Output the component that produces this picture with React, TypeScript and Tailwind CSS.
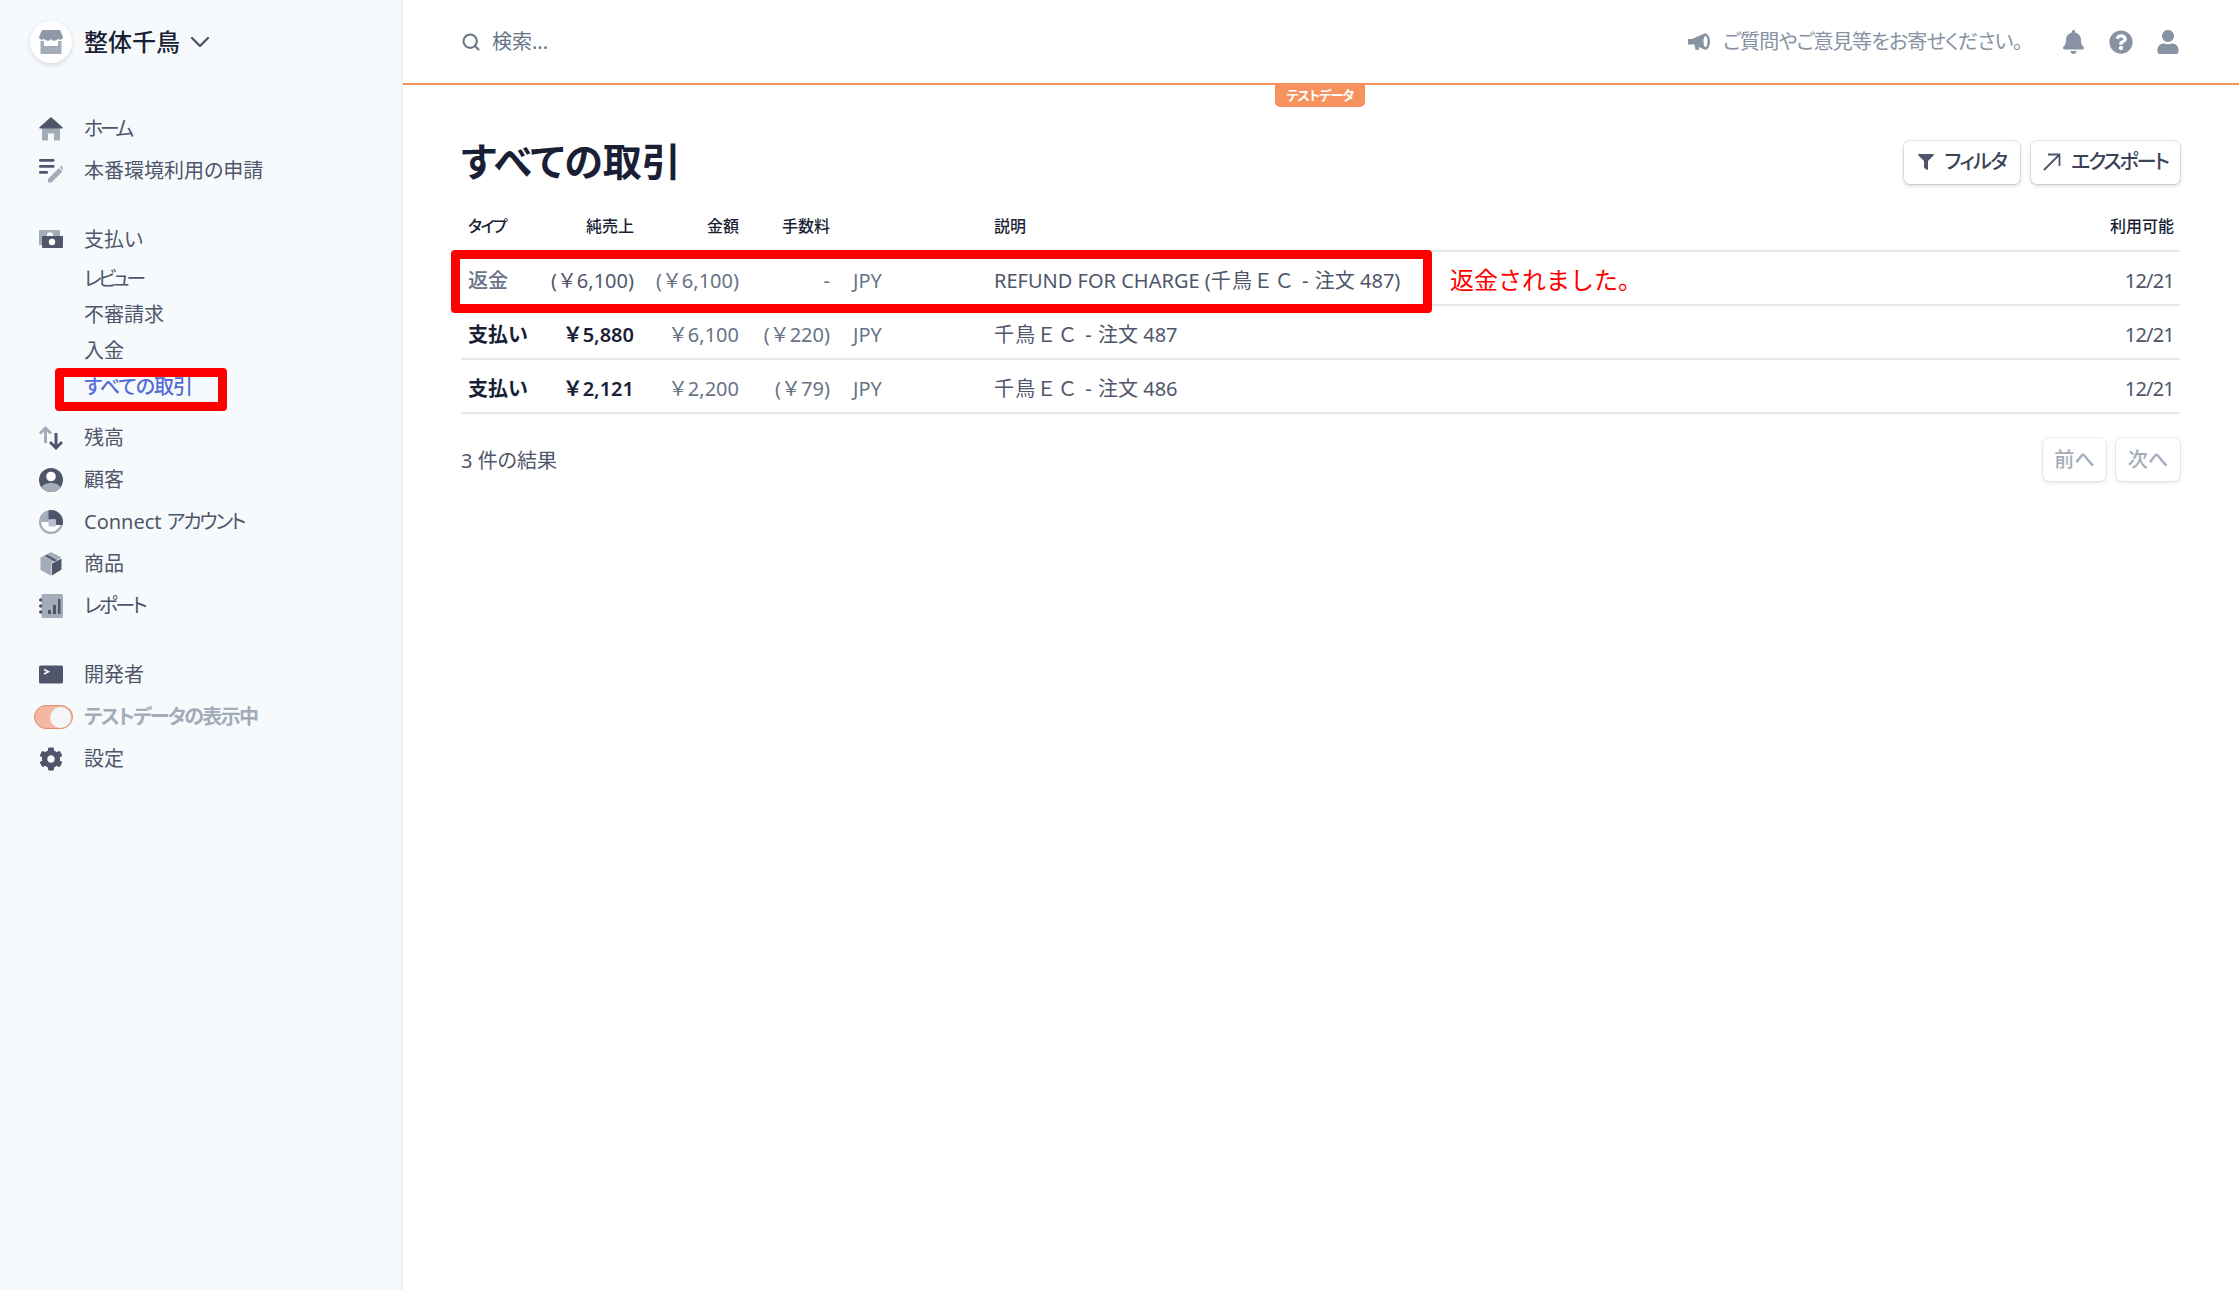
import React from 'react';
import { ChevronDown, Search } from 'lucide-react';
import { FaBell, FaCog, FaFilter, FaQuestionCircle, FaUser } from 'react-icons/fa';

const LIGHT = '#a3acb9';
const DARK = '#4f566b';

const IconBox: React.FC<{ children: React.ReactNode }> = ({ children }) => (
  <svg viewBox="0 0 24 24" className="w-6 h-6 shrink-0">{children}</svg>
);

const HomeIcon = () => (
  <IconBox>
    <path fill={LIGHT} d="M3 11h18v11.500a1 1 0 0 1-1 1h-5v-7H9v7H4a1 1 0 0 1-1-1z" />
    <path fill={DARK} d="M12 0 23.500 10.200c.5.5.2 1.300-.5 1.300H1c-.7 0-1-.8-.5-1.300z" />
  </IconBox>
);
const ApplyIcon = () => (
  <IconBox>
    <rect y="0" width="15.500" height="2.800" rx="1.200" fill={DARK} />
    <rect y="6" width="15.500" height="2.800" rx="1.200" fill={DARK} />
    <rect y="12" width="9" height="2.800" rx="1.200" fill={DARK} />
    <path fill={LIGHT} d="M9 23.500v-3.500L20 9l3.500 3.500-11 11z" />
    <path fill={LIGHT} d="M21 7.500l1-1 2 2v1.500l-1 1z" />
  </IconBox>
);
const PaymentsIcon = () => (
  <IconBox>
    <rect y="2" width="21" height="15" rx="1" fill={LIGHT} />
    <circle cx="11" cy="7.500" r="3.200" fill="#f7fafc" />
    <rect x="3" y="8" width="21" height="12" rx="1" fill={DARK} />
    <circle cx="13" cy="14" r="3.200" fill="#fff" />
  </IconBox>
);
const BalanceIcon = () => (
  <IconBox>
    <path fill={LIGHT} d="M6.500 0 13 6.500l-2 2-3-3V17H5V5.500l-3 3-2-2z" />
    <path fill={DARK} d="M17 24l-7-7 2-2 3.500 3.500V7h3v11.500L22 15l2 2z" />
  </IconBox>
);
const CustomerIcon = () => (
  <IconBox>
    <circle cx="12" cy="12" r="12" fill={DARK} />
    <path fill={LIGHT} d="M2.500 19.500C4.500 16 8 15 12 15s7.500 1 9.500 4.500A12 12 0 0 1 12 24a12 12 0 0 1-9.500-4.500z" />
    <circle cx="12" cy="8.500" r="4.800" fill="#fff" />
  </IconBox>
);
const ConnectIcon = () => (
  <IconBox>
    <circle cx="12" cy="12" r="12" fill={LIGHT} />
    <circle cx="12" cy="12" r="9.800" fill="#fff" />
    <path fill={LIGHT} d="M2.200 12A9.800 9.800 0 0 1 12 2.200V12z" />
    <path fill={DARK} d="M9.500 .3A12 12 0 0 1 24 12a12 12 0 0 1-.4 3H16.500V9.500H9.500z" />
    <rect x="9.500" y="9.500" width="7" height="7" fill="#b9c0cb" />
  </IconBox>
);
const ProductIcon = () => (
  <IconBox>
    <path fill={LIGHT} d="M12 0 22.500 5.500 12.500 11v13L1.500 18V5.500z" />
    <path fill={DARK} d="M13 11.500 22.500 6.500V17.500L13 23.500z" />
    <path fill={DARK} d="M8 2.800 18 8.300l-2 1.100L6 3.900z" />
  </IconBox>
);
const ReportIcon = () => (
  <IconBox>
    <rect x="2.500" width="21.500" height="24" rx="1.500" fill={LIGHT} />
    <circle cx="1.700" cy="6" r="1.700" fill={DARK} />
    <circle cx="1.700" cy="12" r="1.700" fill={DARK} />
    <circle cx="1.700" cy="18" r="1.700" fill={DARK} />
    <path fill={DARK} d="M9 16h3v4H9zM14 11h3v9h-3zM19 5h2.500v15H19z" />
  </IconBox>
);
const DeveloperIcon = () => (
  <IconBox>
    <rect y="2.500" width="24" height="18" rx="1.500" fill={DARK} />
    <path d="M5 6.500l4.500 2.300L5 11" fill="none" stroke="#fff" strokeWidth="1.500" />
  </IconBox>
);
const StoreIcon = () => (
  <svg viewBox="0 0 24 24" className="w-6 h-6">
    <path fill="#8f99a8" d="M3 0h18l3 7a2.700 2.700 0 0 1-4.800 1.700A3.400 3.400 0 0 1 16 10.500a3.400 3.400 0 0 1-4-1.500 3.400 3.400 0 0 1-4 1.500 3.400 3.400 0 0 1-3.200-1.800A2.700 2.700 0 0 1 0 7z" />
    <path fill={LIGHT} d="M1.500 11H5v5h14v-5h3.500v12a1 1 0 0 1-1 1h-19a1 1 0 0 1-1-1z" />
  </svg>
);
const MegaphoneIcon = () => (
  <svg viewBox="0 0 22 17" className="w-[22px] h-[17px]">
    <path fill="#8792a2" d="M0 6h4L17 .2c2.800 0 5 3.600 5 8.300s-2.200 8.300-5 8.300L10.500 13.700l.8 3H7.500L6.500 11.500H4H0z" />
    <ellipse cx="17.500" cy="8.500" rx="2" ry="5.500" fill="#fff" />
  </svg>
);
const ExportArrow = () => (
  <svg viewBox="0 0 18 18" className="w-[18px] h-[18px]" fill="none" stroke="#4f566b" strokeWidth="1.800">
    <path d="M1 17 16.500 1.500M5 1.500h11.500V13" />
  </svg>
);

const NavItem: React.FC<{ icon?: React.ReactNode; label: React.ReactNode; tight?: string }> = ({ icon, label, tight }) => (
  <div className="flex items-center h-[42px] pl-[39px] gap-[21px] text-[20px] text-[#4f566b]">
    {icon}
    <span className={tight}>{label}</span>
  </div>
);

const SubItem: React.FC<{ label: string; tight?: string }> = ({ label, tight }) => (
  <div className={`h-9 flex items-center pl-[84px] text-[20px] text-[#4f566b] ${tight ?? ''}`}>{label}</div>
);

const rows = [
  { type: '返金', net: '(￥6,100)', amount: '(￥6,100)', fee: '-', before: 'REFUND FOR CHARGE (', after: ' 注文 487)', refund: true },
  { type: '支払い', net: '￥5,880', amount: '￥6,100', fee: '(￥220)', before: '', after: ' 注文 487', refund: false },
  { type: '支払い', net: '￥2,121', amount: '￥2,200', fee: '(￥79)', before: '', after: ' 注文 486', refund: false },
];

const cols = 'grid grid-cols-[80px_86px_105px_91px_164px_1fr_auto] items-center pl-[7px] pr-[6px]';
const softBtn = 'h-[43px] rounded-md bg-white shadow-[0_0_0_1px_rgba(60,66,87,0.08),0_2px_4px_rgba(60,66,87,0.12)] text-[20px] font-medium text-[#a3acb9]';
const mainBtn = 'h-[43px] rounded-md bg-white shadow-[0_0_0_1px_rgba(60,66,87,0.12),0_2px_4px_rgba(60,66,87,0.2)] flex items-center justify-center whitespace-nowrap text-[20px] font-medium text-[#3c4257]';

export default function App() {
  return (
    <div
      className="flex h-screen bg-white overflow-hidden [font-feature-settings:'palt']"
      style={{ fontFamily: '"Noto Sans", "Noto Sans CJK JP", sans-serif' }}
    >
      {/* Sidebar */}
      <aside className="w-[403px] shrink-0 bg-[#f7fafc] border-r-2 border-[#eef1f5]">
        <div className="h-[84px] flex items-center pl-[30px]">
          <div className="w-[42px] h-[42px] rounded-full bg-white shadow-[0_2px_5px_rgba(60,66,87,0.18)] flex items-center justify-center">
            <StoreIcon />
          </div>
          <span className="ml-3 text-[24px] font-medium text-[#1a1f36] [font-feature-settings:normal]">整体千鳥</span>
          <ChevronDown className="ml-1 w-8 h-8 text-[#4f566b]" strokeWidth={1.8} />
        </div>

        <nav className="pt-6">
          <NavItem icon={<HomeIcon />} label="ホーム" tight="tracking-[-3.5px]" />
          <NavItem icon={<ApplyIcon />} label="本番環境利用の申請" />

          <div className="mt-[27px]">
            <NavItem icon={<PaymentsIcon />} label="支払い" />
            <SubItem label="レビュー" tight="tracking-[-3.5px]" />
            <SubItem label="不審請求" />
            <SubItem label="入金" />
            <div className="relative h-9 flex items-center pl-[84px] text-[20px] font-medium text-[#556cd6] tracking-[-1px]">
              すべての取引
              {/* annotation */}
              <div className="absolute left-[55px] top-[-1px] w-[172px] h-[43px] border-[9px] border-[#ff0000] rounded-[4px]" />
            </div>
          </div>

          <div className="mt-3">
            <NavItem icon={<BalanceIcon />} label="残高" />
            <NavItem icon={<CustomerIcon />} label="顧客" />
            <NavItem
              icon={<ConnectIcon />}
              label={<>Connect <span className="tracking-[-2.2px]">アカウント</span></>}
            />
            <NavItem icon={<ProductIcon />} label="商品" />
            <NavItem icon={<ReportIcon />} label="レポート" tight="tracking-[-2.8px]" />
          </div>

          <div className="mt-[27px]">
            <NavItem icon={<DeveloperIcon />} label="開発者" />
            <div className="flex items-center h-[42px] pl-[34px] gap-[11px] text-[20px] font-semibold text-[#a3acb9]">
              <div className="w-[39px] h-6 rounded-full bg-[#f3b7a2] border border-[#dc8f74] flex items-center justify-end pr-px">
                <div className="w-[21px] h-[21px] rounded-full bg-[#f4f5f8]" />
              </div>
              <span className="tracking-[-1.7px]">テストデータの表示中</span>
            </div>
            <NavItem icon={<FaCog className="w-6 h-6 shrink-0 text-[#4f566b]" />} label="設定" />
          </div>
        </nav>
      </aside>

      {/* Main */}
      <main className="flex-1 min-w-0">
        <header className="relative h-[85px] border-b-2 border-[#f5925e] flex items-center justify-between pl-[58px] pr-[59px]">
          <div className="flex items-center gap-[11px] text-[20px] text-[#697386]">
            <Search className="w-5 h-5 text-[#697386]" strokeWidth={2.5} />
            <span>検索...</span>
          </div>
          <div className="flex items-center text-[#8792a2]">
            <MegaphoneIcon />
            <span className="ml-[13px] text-[20px] tracking-[-0.75px]">ご質問やご意見等をお寄せください。</span>
            <FaBell className="ml-[41px] w-[21px] h-6" />
            <FaQuestionCircle className="ml-[25px] w-6 h-6" />
            <FaUser className="ml-[23px] w-6 h-6" />
          </div>
          <div className="absolute left-[872px] top-[85px] w-[90px] h-[22px] rounded-b-[5px] bg-[#f5925e] text-white text-[13px] font-bold tracking-[-0.8px] flex items-center justify-center">
            テストデータ
          </div>
        </header>

        <div className="pl-[58px] pr-[59px]">
          <div className="flex items-center justify-between pt-[54px]">
            <h1 className="text-[39px] leading-[44px] mb-[2px] font-semibold text-[#1a1f36]">すべての取引</h1>
            <div className="flex gap-[11px]">
              <button className={`${mainBtn} w-[116px] gap-[11px] tracking-[-1.5px]`}>
                <FaFilter className="w-4 h-4 text-[#4f566b]" />
                フィルタ
              </button>
              <button className={`${mainBtn} w-[149px] gap-[10px] tracking-[-2px]`}>
                <ExportArrow />
                エクスポート
              </button>
            </div>
          </div>

          <div className={`${cols} mt-[17px] h-[50px] border-b-2 border-[#e3e8ee] text-[16px] font-medium text-[#1a1f36]`}>
            <div className="tracking-[-1.5px]">タイプ</div>
            <div className="text-right">純売上</div>
            <div className="text-right">金額</div>
            <div className="text-right">手数料</div>
            <div />
            <div>説明</div>
            <div className="text-right">利用可能</div>
          </div>

          {rows.map((row, index) => (
            <div key={index} className={`${cols} relative h-[54px] pt-[6px] border-b-2 border-[#e3e8ee] text-[20px] text-[#4f566b] [font-feature-settings:normal]`}>
              <div className={row.refund ? 'font-medium text-[#697386]' : 'font-bold text-[#1a1f36]'}>{row.type}</div>
              <div className={`text-right ${row.refund ? '' : 'font-semibold text-[#1a1f36]'}`}>{row.net}</div>
              <div className="text-right text-[#697386]">{row.amount}</div>
              <div className="text-right text-[#697386]">{row.fee}</div>
              <div className="pl-[23px] text-[#697386]">JPY</div>
              <div>
                {row.before}
                <span className="tracking-[1.2px]">千鳥ＥＣ -</span>
                {row.after}
              </div>
              <div className="text-right tracking-[-0.8px]">12/21</div>
              {row.refund && (
                <>
                  <div className="absolute left-[-10px] top-[-2px] w-[981px] h-[63px] border-[9px] border-[#ff0000] rounded-[4px]" />
                  <div className="absolute left-[989px] top-[12px] text-[24px] leading-[32px] text-[#ff0000]">返金されました。</div>
                </>
              )}
            </div>
          ))}

          <div className="flex items-center justify-between mt-[24px]">
            <div className="pt-[2px] text-[20px] text-[#4f566b]">3 件の結果</div>
            <div className="flex gap-[10px]">
              <button className={`${softBtn} w-[63px]`}>前へ</button>
              <button className={`${softBtn} w-[64px]`}>次へ</button>
            </div>
          </div>
        </div>
      </main>
    </div>
  );
}
